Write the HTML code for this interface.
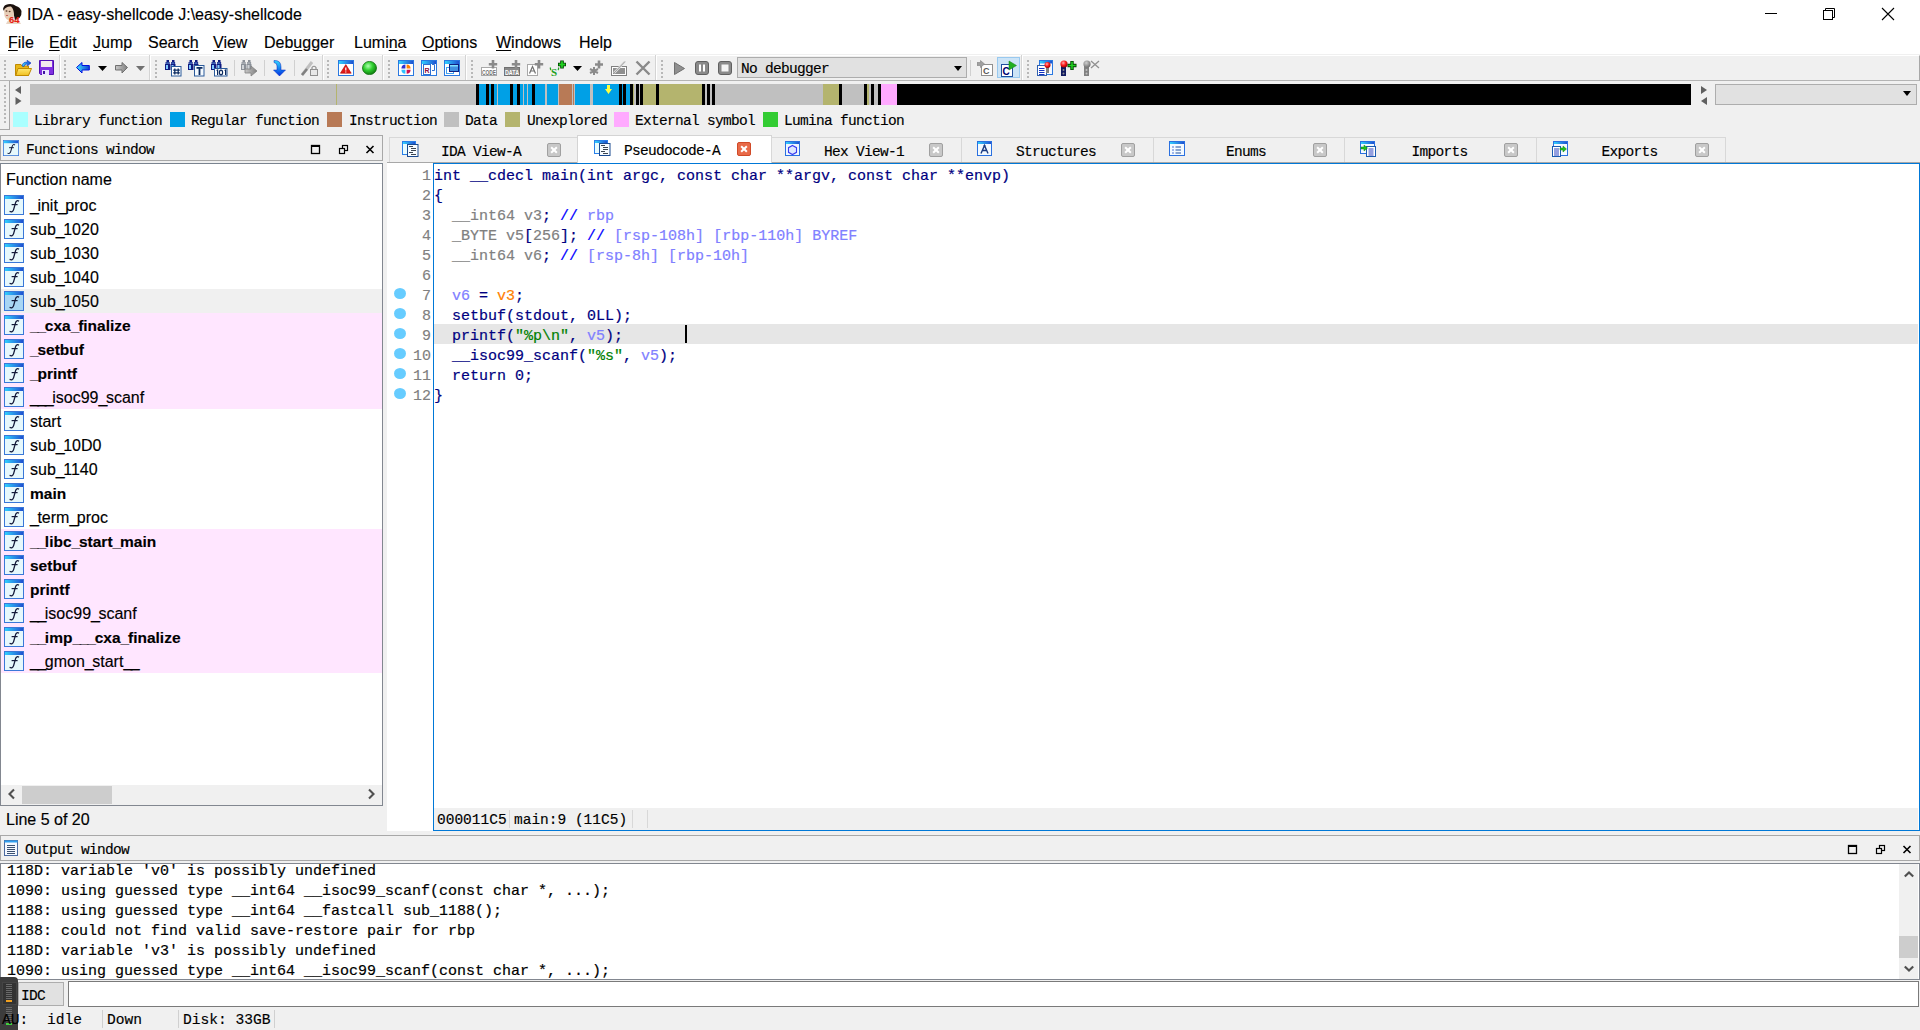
<!DOCTYPE html><html><head><meta charset="utf-8"><style>
*{box-sizing:border-box}
html,body{margin:0;padding:0}
body{width:1920px;height:1030px;overflow:hidden;position:relative;background:#f0f0f0;font-family:"Liberation Sans",sans-serif;color:#000;-webkit-text-stroke:0.15px currentColor}
.a{position:absolute}
svg text{-webkit-text-stroke:0}
.pre{white-space:pre}
.mono{font-family:"Liberation Mono",monospace}
.mi{position:absolute;top:33px;font-size:16px;line-height:20px;white-space:pre}
.mi u{text-decoration:underline;text-underline-offset:1.5px;text-decoration-thickness:1px}
.grip{position:absolute;width:2px;background:repeating-linear-gradient(to bottom,#b8b8b8 0 2px,transparent 2px 4px)}
.lsw{position:absolute;top:112px;width:15px;height:15px}
.lt{position:absolute;top:113px;font-family:"Liberation Mono",monospace;font-size:14.5px;letter-spacing:-0.7px;line-height:16px;white-space:pre}
.nb{position:absolute;top:84px;height:21px}
.fi{position:absolute;left:4px;width:20px;height:20px;border:1px solid #3a7ad8;background:linear-gradient(#3ab8f0,#3a6ad8) top/100% 3px no-repeat,#e6f8fc}
.fi:after{content:"f";position:absolute;left:5px;top:0px;font-family:"Liberation Serif",serif;font-style:italic;font-size:17px;line-height:18px;color:#1a2040}
.fr{position:absolute;left:1px;width:381px;height:24px}
.ft{position:absolute;left:30px;font-size:16px;line-height:20px;white-space:pre}
.ftb{font-weight:bold;font-size:15.5px}
.tab{position:absolute;top:137px;height:25px;border:1px solid #d8d8d8;border-bottom:none;background:#f0f0f0}
.tabt{position:absolute;top:143px;font-family:"Liberation Mono",monospace;font-size:14.5px;letter-spacing:-0.7px;line-height:16px;white-space:pre;text-align:center}
.tcl{position:absolute;top:143px;width:14px;height:14px;border:1px solid #a0a0a0;border-radius:2px;background:#c8c8c8}
.tcl:before,.tcl:after{content:"";position:absolute;left:2px;top:5px;width:8px;height:2px;background:#fff;transform:rotate(45deg)}
.tcl:after{transform:rotate(-45deg)}
.code{position:absolute;left:434px;font-family:"Liberation Mono",monospace;font-size:15px;line-height:20px;white-space:pre;color:#000080;-webkit-text-stroke:0.2px currentColor}
.ln{position:absolute;left:395px;width:36px;text-align:right;font-family:"Liberation Mono",monospace;font-size:15px;line-height:20px;color:#808080}
.dot{position:absolute;left:394px;width:12px;height:11px;border-radius:50%;background:#66ccff}
.g{color:#808080}.b{color:#0000ff}.v{color:#8080ff}.o{color:#ff8000}.s{color:#008000}
.out{position:absolute;left:7px;font-family:"Liberation Mono",monospace;font-size:15px;line-height:20px;white-space:pre;-webkit-text-stroke:0.2px currentColor}
</style></head><body>
<div class="a" style="left:0;top:0;width:1920px;height:54px;background:#fff"></div>
<svg class="a" style="left:0px;top:0px" width="26" height="26" viewBox="0 0 26 26">
<path d="M6 24 Q7 21 9 20 L18 19 Q20 22 21 24Z" fill="#e8d4c4"/>
<path d="M3 9 Q4 4.5 8 4.2 Q13 3.5 16 6 Q20 7 21.5 11 Q22 15 19.5 18 L15 20 Q14 14 12 9 Q8 7 4 11Z" fill="#1a100c"/>
<path d="M4 10 Q6 6 11 6.5 Q14 9 14 15 Q13.5 20 10 20.5 Q6 20 4.5 16Z" fill="#e6cdb6"/>
<ellipse cx="6.5" cy="11" rx="1" ry="0.7" fill="#5a3a2a"/><ellipse cx="9.6" cy="11.5" rx="1" ry="0.7" fill="#5a3a2a"/>
<ellipse cx="7" cy="15.5" rx="1.2" ry="0.6" fill="#c05050"/>
<text x="9" y="23.2" font-family="Liberation Sans" font-size="9.5" font-weight="bold" fill="#e82010">64</text>
</svg>
<div class="a pre" style="left:27px;top:5px;font-size:16px;line-height:20px">IDA - easy-shellcode J:\easy-shellcode</div>
<svg class="a" style="left:1760px;top:4px" width="150" height="22" viewBox="0 0 150 22">
<rect x="5" y="9" width="12" height="1" fill="#000"/>
<rect x="63.5" y="6.5" width="9" height="9" fill="none" stroke="#000" stroke-width="1"/>
<path d="M65.5 6.5 V4.5 H74.5 V13.5 H72.5" fill="none" stroke="#000" stroke-width="1"/>
<path d="M122 4 L134 16 M134 4 L122 16" stroke="#000" stroke-width="1.1"/>
</svg>
<div class="mi" style="left:8px"><u>F</u>ile</div>
<div class="mi" style="left:49px"><u>E</u>dit</div>
<div class="mi" style="left:93px"><u>J</u>ump</div>
<div class="mi" style="left:148px">Searc<u>h</u></div>
<div class="mi" style="left:213px"><u>V</u>iew</div>
<div class="mi" style="left:264px">Deb<u>u</u>gger</div>
<div class="mi" style="left:354px">Lumi<u>n</u>a</div>
<div class="mi" style="left:422px"><u>O</u>ptions</div>
<div class="mi" style="left:496px"><u>W</u>indows</div>
<div class="mi" style="left:579px">Help</div>
<div class="a" style="left:0;top:55px;width:1920px;height:26px;background:#f0f0f0;border-top:1px solid #fff;border-bottom:1px solid #b4b4b4;border-right:1px solid #a8a8a8"></div>
<div class="a" style="left:59px;top:55px;width:1px;height:25px;background:#d4d4d4"></div><div class="a" style="left:60px;top:55px;width:1px;height:25px;background:#fff"></div>
<div class="a" style="left:149px;top:55px;width:1px;height:25px;background:#d4d4d4"></div><div class="a" style="left:150px;top:55px;width:1px;height:25px;background:#fff"></div>
<div class="a" style="left:322px;top:55px;width:1px;height:25px;background:#d4d4d4"></div><div class="a" style="left:323px;top:55px;width:1px;height:25px;background:#fff"></div>
<div class="a" style="left:382px;top:55px;width:1px;height:25px;background:#d4d4d4"></div><div class="a" style="left:383px;top:55px;width:1px;height:25px;background:#fff"></div>
<div class="a" style="left:465px;top:55px;width:1px;height:25px;background:#d4d4d4"></div><div class="a" style="left:466px;top:55px;width:1px;height:25px;background:#fff"></div>
<div class="a" style="left:655px;top:55px;width:1px;height:25px;background:#d4d4d4"></div><div class="a" style="left:656px;top:55px;width:1px;height:25px;background:#fff"></div>
<div class="a" style="left:1021px;top:55px;width:1px;height:25px;background:#d4d4d4"></div><div class="a" style="left:1022px;top:55px;width:1px;height:25px;background:#fff"></div>
<div class="grip" style="left:4px;top:60px;height:18px"></div>
<div class="grip" style="left:64px;top:60px;height:18px"></div>
<div class="grip" style="left:155px;top:60px;height:18px"></div>
<div class="grip" style="left:327px;top:60px;height:18px"></div>
<div class="grip" style="left:388px;top:60px;height:18px"></div>
<div class="grip" style="left:471px;top:60px;height:18px"></div>
<div class="grip" style="left:661px;top:60px;height:18px"></div>
<div class="grip" style="left:1027px;top:60px;height:18px"></div>
<div class="a" style="left:234px;top:60px;width:1px;height:16px;background:#d0d0d0"></div>
<div class="a" style="left:264px;top:60px;width:1px;height:16px;background:#d0d0d0"></div>
<div class="a" style="left:294px;top:60px;width:1px;height:16px;background:#d0d0d0"></div>
<div class="a" style="left:970px;top:60px;width:1px;height:16px;background:#d0d0d0"></div>
<svg width="0" height="0" style="position:absolute"><defs>
<linearGradient id="gFold" x1="0" y1="0" x2="0" y2="1"><stop offset="0" stop-color="#ffe870"/><stop offset="1" stop-color="#f0c020"/></linearGradient>
<linearGradient id="gBlueArr" x1="0" y1="0" x2="1" y2="0"><stop offset="0" stop-color="#40e0ff"/><stop offset="1" stop-color="#1040d0"/></linearGradient>
<linearGradient id="gGrayArr" x1="0" y1="0" x2="1" y2="0"><stop offset="0" stop-color="#c8c8c8"/><stop offset="1" stop-color="#808080"/></linearGradient>
<linearGradient id="gWin" x1="0" y1="0" x2="1" y2="0"><stop offset="0" stop-color="#30d0ff"/><stop offset="1" stop-color="#2050d0"/></linearGradient>
<linearGradient id="gDown" x1="0" y1="0" x2="0" y2="1"><stop offset="0" stop-color="#30d8ff"/><stop offset="1" stop-color="#0030e0"/></linearGradient>
<radialGradient id="gGreen" cx="0.4" cy="0.35" r="0.65"><stop offset="0" stop-color="#b0ffb0"/><stop offset="0.5" stop-color="#30d030"/><stop offset="1" stop-color="#108010"/></radialGradient>
<radialGradient id="gRed" cx="0.4" cy="0.35" r="0.65"><stop offset="0" stop-color="#ffb0b0"/><stop offset="0.5" stop-color="#ff2020"/><stop offset="1" stop-color="#a00000"/></radialGradient>
<radialGradient id="gGrayB" cx="0.4" cy="0.35" r="0.65"><stop offset="0" stop-color="#d0d0d0"/><stop offset="1" stop-color="#707070"/></radialGradient>
<symbol id="fic" viewBox="0 0 20 20"><rect x="0.5" y="0.5" width="19" height="19" fill="#e6f8fc" stroke="#3a78d8"/><rect x="1" y="1" width="18" height="3" fill="url(#gWin)"/><path d="M15 6.2 C13.6 5.2 12.2 5.6 11.6 7.6 L9.6 14.6 C9 16.8 7.6 17.2 5.6 16.4" fill="none" stroke="#141a3a" stroke-width="1.3"/><path d="M7.6 9.6 H13.6" stroke="#141a3a" stroke-width="1.2"/></symbol>
<symbol id="ficsel" viewBox="0 0 20 20"><rect x="0.5" y="0.5" width="19" height="19" fill="#a8d6f4" stroke="#3a78d8"/><rect x="1" y="1" width="18" height="3" fill="url(#gWin)"/><path d="M15 6.2 C13.6 5.2 12.2 5.6 11.6 7.6 L9.6 14.6 C9 16.8 7.6 17.2 5.6 16.4" fill="none" stroke="#141a3a" stroke-width="1.3"/><path d="M7.6 9.6 H13.6" stroke="#141a3a" stroke-width="1.2"/></symbol>
<symbol id="winic" viewBox="0 0 16 16"><rect x="0.5" y="0.5" width="15" height="15" fill="#fff" stroke="#2a78e0"/><rect x="1" y="1" width="14" height="3" fill="url(#gWin)"/></symbol>
</defs></svg>
<svg class="a" style="left:15px;top:60px" width="17" height="16" viewBox="0 0 17 16"><path d="M0.5 4.5 H6 L7 6 H13.5 V15.5 H0.5Z" fill="#e8b818" stroke="#c08a00"/><path d="M3 8.5 H16.5 L13.5 15.5 H0.8Z" fill="url(#gFold)" stroke="#c08a00"/><path d="M7 6 Q8 1.5 12.5 2.2 L12 0.3 L16 3 L12.5 5.8 L12.6 4 Q9.5 3.6 9 6.5Z" fill="url(#gBlueArr)" stroke="#1030c0" stroke-width="0.6"/></svg>
<svg class="a" style="left:39px;top:60px" width="15" height="15" viewBox="0 0 15 15"><path d="M0.5 0.5 H14.5 V14.5 H1.5 L0.5 13.5Z" fill="#8030e0" stroke="#5010b0"/><rect x="2" y="1" width="11" height="6" fill="#f4e8ee"/><rect x="3" y="10" width="7" height="5" fill="#eae6ff"/><rect x="4" y="11" width="2" height="3" fill="#4010a0"/></svg>
<svg class="a" style="left:76px;top:62px" width="14" height="12" viewBox="0 0 14 12"><path d="M0.5 5.5 L6 0.5 V3.5 H13.3 V8 H6 V11 Z" fill="url(#gBlueArr)" stroke="#0010e0" stroke-width="1"/></svg>
<svg class="a" style="left:98px;top:66px" width="9" height="5" viewBox="0 0 9 5"><path d="M0 0 H9 L4.5 5Z" fill="#000"/></svg>
<svg class="a" style="left:115px;top:62px" width="13" height="12" viewBox="0 0 13 12"><path d="M12.5 5.5 L7 0.5 V3.5 H0.5 V8 H7 V11 Z" fill="url(#gGrayArr)" stroke="#707070" stroke-width="1"/></svg>
<svg class="a" style="left:136px;top:66px" width="9" height="5" viewBox="0 0 9 5"><path d="M0 0 H9 L4.5 5Z" fill="#707070"/></svg>
<svg class="a" style="left:165px;top:60px" width="17" height="17" viewBox="0 0 17 17"><path d="M1.5 0 H4 V2 H4.6 V4 H5 V10 H0 V4 H0.6 V2 H1.5Z" fill="#101a80"/><rect x="1" y="5" width="2" height="4" fill="#80c8ff"/><rect x="1" y="2.6" width="3" height="1" fill="#80c8ff" opacity="0.7"/><path d="M7.0 0 H9.5 V2 H10.1 V4 H10.5 V10 H5.5 V4 H6.1 V2 H7.0Z" fill="#101a80"/><rect x="6.5" y="5" width="2" height="4" fill="#80c8ff"/><rect x="6.5" y="2.6" width="3" height="1" fill="#80c8ff" opacity="0.7"/><rect x="6.5" y="6.5" width="9.5" height="9.5" fill="#fff" stroke="#2a5a9a"/><path d="M9.8 8.5 V14.5 M13.2 8.5 V14.5 M8.2 10.2 H14.8 M8.2 12.8 H14.8" stroke="#0a2a60" stroke-width="1.3"/></svg>
<svg class="a" style="left:188px;top:60px" width="17" height="17" viewBox="0 0 17 17"><path d="M1.5 0 H4 V2 H4.6 V4 H5 V10 H0 V4 H0.6 V2 H1.5Z" fill="#101a80"/><rect x="1" y="5" width="2" height="4" fill="#80c8ff"/><rect x="1" y="2.6" width="3" height="1" fill="#80c8ff" opacity="0.7"/><path d="M7.0 0 H9.5 V2 H10.1 V4 H10.5 V10 H5.5 V4 H6.1 V2 H7.0Z" fill="#101a80"/><rect x="6.5" y="5" width="2" height="4" fill="#80c8ff"/><rect x="6.5" y="2.6" width="3" height="1" fill="#80c8ff" opacity="0.7"/><rect x="6.5" y="5.5" width="9.5" height="10.5" fill="#f4faff" stroke="#2a5a9a"/><path d="M8.5 7.8 H14.5 M11.5 7.8 V15" stroke="#0a2a60" stroke-width="1.8"/></svg>
<svg class="a" style="left:211px;top:60px" width="17" height="17" viewBox="0 0 17 17"><path d="M1.5 0 H4 V2 H4.6 V4 H5 V10 H0 V4 H0.6 V2 H1.5Z" fill="#101a80"/><rect x="1" y="5" width="2" height="4" fill="#80c8ff"/><rect x="1" y="2.6" width="3" height="1" fill="#80c8ff" opacity="0.7"/><path d="M7.0 0 H9.5 V2 H10.1 V4 H10.5 V10 H5.5 V4 H6.1 V2 H7.0Z" fill="#101a80"/><rect x="6.5" y="5" width="2" height="4" fill="#80c8ff"/><rect x="6.5" y="2.6" width="3" height="1" fill="#80c8ff" opacity="0.7"/><rect x="3.5" y="8.5" width="12.5" height="7.5" fill="#fff" stroke="#2a5a9a"/><path d="M5.6 10.6 L6.6 10 V15 M13.6 10.6 L14.6 10 V15" stroke="#0a2a60" stroke-width="1.2" fill="none"/><ellipse cx="10" cy="12.5" rx="1.6" ry="2.3" fill="none" stroke="#0a2a60" stroke-width="1.2"/></svg>
<svg class="a" style="left:241px;top:60px" width="17" height="17" viewBox="0 0 17 17"><path d="M1.5 0 H4 V2 H4.6 V4 H5 V10 H0 V4 H0.6 V2 H1.5Z" fill="#8a9098"/><rect x="1" y="5" width="2" height="4" fill="#d0d4d8"/><rect x="1" y="2.6" width="3" height="1" fill="#d0d4d8" opacity="0.7"/><path d="M7.0 0 H9.5 V2 H10.1 V4 H10.5 V10 H5.5 V4 H6.1 V2 H7.0Z" fill="#8a9098"/><rect x="6.5" y="5" width="2" height="4" fill="#d0d4d8"/><rect x="6.5" y="2.6" width="3" height="1" fill="#d0d4d8" opacity="0.7"/><path d="M4 9 H10 V6 L16 11 L10 16 V13 H4Z" fill="url(#gGrayArr)" stroke="#808080" stroke-width="0.8"/></svg>
<svg class="a" style="left:273px;top:60px" width="13" height="16" viewBox="0 0 13 16"><path d="M1 0.5 Q8 0 8 7 V10 H12.5 L6.5 16 L0.5 10 H4 V6 Q4 3 1 2.5Z" fill="url(#gDown)" stroke="#0020c0" stroke-width="0.5"/></svg>
<svg class="a" style="left:301px;top:60px" width="17" height="16" viewBox="0 0 17 16"><path d="M1 15 L11 2" stroke="#c0c0c0" stroke-width="3"/><path d="M1 15 L6 9" stroke="#808080" stroke-width="2.5"/><rect x="9.5" y="9.5" width="7" height="6" fill="#e8e8e8" stroke="#909090"/><path d="M11 9.5 V7.5 Q13 5 15 7.5 V9.5" fill="none" stroke="#909090" stroke-width="1.2"/></svg>
<svg class="a" style="left:338px;top:60px" width="16" height="16" viewBox="0 0 16 16"><use href="#winic" width="16" height="16"/><path d="M7.8 4.6 L13.2 13.2 H2.4Z" fill="#e01818" stroke="#b00000" stroke-width="0.6"/><path d="M7.8 7.6 V10.6 M7.8 11.4 V12.4" stroke="#fff" stroke-width="1.2"/></svg>
<svg class="a" style="left:362px;top:61px" width="15" height="14" viewBox="0 0 15 14"><ellipse cx="7.5" cy="7" rx="7" ry="6.6" fill="url(#gGreen)" stroke="#107010" stroke-width="0.8"/></svg>
<svg class="a" style="left:398px;top:60px" width="16" height="16" viewBox="0 0 16 16"><use href="#winic" width="16" height="16"/><path d="M7.4 12.5 V8.6 H3.4 A4.2 4.2 0 0 1 7.4 4.6Z" fill="#3030d0"/><path d="M8.6 4.6 A4.2 4.2 0 0 1 12.6 8.6 H8.6Z" fill="#ff8000"/><path d="M3.4 9.8 H7.4 V13.8 A4.2 4.2 0 0 1 3.4 9.8Z" fill="#30c0ff"/><path d="M8.6 9.8 H12.6 A4.2 4.2 0 0 1 8.6 13.8Z" fill="#d01050"/></svg>
<svg class="a" style="left:421px;top:60px" width="16" height="16" viewBox="0 0 16 16"><use href="#winic" width="16" height="16"/><rect x="2.5" y="4.5" width="7" height="10" fill="#fff" stroke="#3070d0"/><text x="3.6" y="12.8" font-family="Liberation Sans" font-weight="bold" font-size="7" fill="#901040">R</text><path d="M11 4.5 H13.5 V10.5 H11" fill="none" stroke="#3070d0"/></svg>
<svg class="a" style="left:444px;top:60px" width="16" height="16" viewBox="0 0 16 16"><use href="#winic" width="16" height="16"/><rect x="2.5" y="7.5" width="7" height="6" fill="#fff" stroke="#40a0f0"/><rect x="5.5" y="4.5" width="9" height="7" fill="#4090e0" stroke="#102080"/><rect x="6" y="5" width="8" height="1.5" fill="#80e0ff"/></svg>
<svg class="a" style="left:481px;top:60px" width="17" height="16" viewBox="0 0 17 16"><rect x="0.5" y="7.5" width="15" height="8" fill="#fff" stroke="#a8a8a8"/><text x="1" y="14.5" font-family="Liberation Sans Narrow,Liberation Sans" font-weight="bold" font-size="6.5" fill="#707070" textLength="14" lengthAdjust="spacingAndGlyphs">CODE</text><path d="M12 0 V8.5 M7.8 4.2 H16.2" stroke="#8a8a8a" stroke-width="2.6"/></svg>
<svg class="a" style="left:504px;top:60px" width="17" height="16" viewBox="0 0 17 16"><rect x="0.5" y="7.5" width="15" height="8" fill="#888" stroke="#707070"/><text x="1" y="14.5" font-family="Liberation Sans" font-weight="bold" font-size="6.5" fill="#fff" textLength="14" lengthAdjust="spacingAndGlyphs">DATA</text><path d="M12 0 V8.5 M7.8 4.2 H16.2" stroke="#8a8a8a" stroke-width="2.6"/></svg>
<svg class="a" style="left:527px;top:60px" width="17" height="16" viewBox="0 0 17 16"><rect x="0.5" y="4.5" width="10" height="11" fill="#fff" stroke="#a8a8a8"/><path d="M2.5 13.5 L5.5 6.5 L8.5 13.5 M3.5 11 H7.5" fill="none" stroke="#707070" stroke-width="1.2"/><path d="M12 0 V8.5 M7.8 4.2 H16.2" stroke="#8a8a8a" stroke-width="2.6"/></svg>
<svg class="a" style="left:549px;top:60px" width="18" height="16" viewBox="0 0 18 16"><text x="2" y="15.5" font-family="Liberation Serif" font-weight="bold" font-size="11" fill="#20a020">S</text><path d="M1.5 7.5 Q1 9 2 10 M9.5 7.5 Q10 9 9 10" stroke="#20a020" stroke-width="1.3" fill="none"/><path d="M13 0.5 V8.5 M9 4.5 H17" stroke="#004000" stroke-width="3.6"/><path d="M13 1.3 V7.7 M9.8 4.5 H16.2" stroke="#20d020" stroke-width="1.8"/></svg>
<svg class="a" style="left:573px;top:66px" width="9" height="5" viewBox="0 0 9 5"><path d="M0 0 H9 L4.5 5Z" fill="#000"/></svg>
<svg class="a" style="left:588px;top:60px" width="16" height="16" viewBox="0 0 16 16"><path d="M6 7 V15 M2 9 L10 13 M10 9 L2 13" stroke="#8a8a8a" stroke-width="2"/><path d="M11 0.5 V8.5 M7 4.5 H15" stroke="#8a8a8a" stroke-width="2.6"/></svg>
<svg class="a" style="left:611px;top:60px" width="17" height="16" viewBox="0 0 17 16"><rect x="0.5" y="6.5" width="15" height="9" fill="#fff" stroke="#808080"/><rect x="2" y="8" width="12" height="6" fill="#909090"/><path d="M3 13 L14 1.5" stroke="#e0e0e0" stroke-width="2.4"/><path d="M3 13 L14 1.5" stroke="#8a8a8a" stroke-width="0.8"/></svg>
<svg class="a" style="left:635px;top:60px" width="16" height="16" viewBox="0 0 16 16"><path d="M1.5 1.5 L14.5 14.5 M14.5 1.5 L1.5 14.5" stroke="#8a8a8a" stroke-width="2.4"/></svg>
<svg class="a" style="left:674px;top:62px" width="11" height="13" viewBox="0 0 11 13"><path d="M0.5 0.5 L10.5 6.5 L0.5 12.5Z" fill="#909090" stroke="#707070"/></svg>
<svg class="a" style="left:695px;top:61px" width="14" height="14" viewBox="0 0 14 14"><rect x="0.5" y="0.5" width="13" height="13" rx="2.5" fill="#8a8a8a" stroke="#606060"/><rect x="4" y="3.5" width="2" height="7" fill="#fff"/><rect x="8" y="3.5" width="2" height="7" fill="#fff"/></svg>
<svg class="a" style="left:718px;top:61px" width="14" height="14" viewBox="0 0 14 14"><rect x="0.5" y="0.5" width="13" height="13" rx="2.5" fill="#8a8a8a" stroke="#606060"/><rect x="3.5" y="3.5" width="7" height="7" fill="#f4f4f4"/></svg>
<div class="a" style="left:737px;top:57px;width:230px;height:21px;background:#e1e1e1;border:1px solid #adadad"></div>
<div class="a mono pre" style="left:741px;top:61px;font-size:14.5px;letter-spacing:-0.7px;line-height:16px">No debugger</div>
<svg class="a" style="left:954px;top:66px" width="8" height="5" viewBox="0 0 8 5"><path d="M0 0 H8 L4 5Z" fill="#000"/></svg>
<svg class="a" style="left:977px;top:60px" width="17" height="16" viewBox="0 0 17 16"><rect x="4.5" y="4.5" width="11" height="11" fill="#fff" stroke="#909090"/><text x="6" y="14" font-family="Liberation Sans" font-weight="bold" font-size="9" fill="#585858">C</text><path d="M0 2.5 H3.5 V0.5 L7.5 4 L3.5 7.5 V5.5 H0Z" fill="#a0a0a0" stroke="#808080" stroke-width="0.6"/></svg>
<div class="a" style="left:997px;top:57px;width:23px;height:21px;background:#cce4f7;border:1px solid #99c9ef"></div>
<svg class="a" style="left:1001px;top:60px" width="16" height="17" viewBox="0 0 16 17"><rect x="0.5" y="4.5" width="11" height="12" fill="#fff" stroke="#2050a0"/><text x="1.6" y="14.5" font-family="Liberation Sans" font-weight="bold" font-size="10" fill="#000070">C</text><path d="M8 1 L15.5 5.5 L8 10Z" fill="#20b020" stroke="#108010" stroke-width="0.5"/></svg>
<svg class="a" style="left:1037px;top:60px" width="16" height="16" viewBox="0 0 16 16"><rect x="2.5" y="0.5" width="13" height="14" fill="#f4f8ff" stroke="#2a78e0"/><rect x="3" y="1" width="12" height="2.5" fill="url(#gWin)"/><rect x="0.5" y="5.5" width="9" height="10" fill="#fff" stroke="#3060b0"/><path d="M2 8.5H7.5M2 10.5H7.5M2 12.5H7.5M2 14.5H7.5" stroke="#1030c0"/><rect x="9" y="7" width="3" height="6" fill="#808080"/><circle cx="10.5" cy="5" r="3" fill="url(#gRed)"/></svg>
<svg class="a" style="left:1060px;top:60px" width="17" height="16" viewBox="0 0 17 16"><rect x="1" y="5" width="5" height="11" fill="#101a60"/><circle cx="3.5" cy="10" r="1" fill="#909090"/><circle cx="3.5" cy="13.5" r="1" fill="#909090"/><circle cx="4" cy="4" r="3.6" fill="url(#gRed)"/><path d="M12 1 V10 M7.5 5.5 H16.5" stroke="#004000" stroke-width="3.4"/><path d="M12 1.8 V9.2 M8.3 5.5 H15.7" stroke="#20d020" stroke-width="1.6"/></svg>
<svg class="a" style="left:1083px;top:60px" width="17" height="16" viewBox="0 0 17 16"><rect x="1" y="5" width="5" height="11" fill="#808080"/><circle cx="3.5" cy="10" r="1" fill="#c0c0c0"/><circle cx="3.5" cy="13.5" r="1" fill="#c0c0c0"/><circle cx="4" cy="4" r="3.6" fill="url(#gGrayB)"/><path d="M8 1 L16 8 M16 1 L8 8" stroke="#909090" stroke-width="1.3"/></svg>
<div class="a" style="left:0;top:81px;width:10px;height:49px;border-right:1px solid #a8a8a8;border-bottom:1px solid #a8a8a8;background:#f0f0f0"></div>
<div class="grip" style="left:4px;top:85px;height:40px"></div>
<svg class="a" style="left:14px;top:85px" width="10" height="21"><path d="M7 1 L1 5 L7 9Z M1.5 12 L7.5 16 L1.5 20Z" fill="#606060"/></svg>
<div class="nb" style="left:30px;width:446px;background:#c0c0c0"></div>
<div class="nb" style="left:476px;width:3px;background:#000"></div>
<div class="nb" style="left:479px;width:7px;background:#00a0e6"></div>
<div class="nb" style="left:486px;width:3px;background:#000"></div>
<div class="nb" style="left:489px;width:2px;background:#00a0e6"></div>
<div class="nb" style="left:491px;width:3px;background:#000"></div>
<div class="nb" style="left:494px;width:3px;background:#00a0e6"></div>
<div class="nb" style="left:497px;width:1px;background:#c0c0c0"></div>
<div class="nb" style="left:498px;width:12px;background:#00a0e6"></div>
<div class="nb" style="left:510px;width:3px;background:#000"></div>
<div class="nb" style="left:513px;width:4px;background:#00a0e6"></div>
<div class="nb" style="left:517px;width:3px;background:#000"></div>
<div class="nb" style="left:520px;width:3px;background:#00a0e6"></div>
<div class="nb" style="left:523px;width:1px;background:#c0c0c0"></div>
<div class="nb" style="left:524px;width:3px;background:#00a0e6"></div>
<div class="nb" style="left:527px;width:1px;background:#c0c0c0"></div>
<div class="nb" style="left:528px;width:4px;background:#00a0e6"></div>
<div class="nb" style="left:532px;width:3px;background:#000"></div>
<div class="nb" style="left:535px;width:10px;background:#00a0e6"></div>
<div class="nb" style="left:545px;width:2px;background:#c0c0c0"></div>
<div class="nb" style="left:547px;width:11px;background:#00a0e6"></div>
<div class="nb" style="left:558px;width:1px;background:#c0c0c0"></div>
<div class="nb" style="left:559px;width:13px;background:#b87a56"></div>
<div class="nb" style="left:572px;width:1px;background:#c0c0c0"></div>
<div class="nb" style="left:573px;width:1px;background:#b87a56"></div>
<div class="nb" style="left:574px;width:1px;background:#c0c0c0"></div>
<div class="nb" style="left:575px;width:15px;background:#00a0e6"></div>
<div class="nb" style="left:590px;width:3px;background:#c0c0c0"></div>
<div class="nb" style="left:593px;width:26px;background:#00a0e6"></div>
<div class="nb" style="left:619px;width:3px;background:#000"></div>
<div class="nb" style="left:622px;width:1px;background:#00a0e6"></div>
<div class="nb" style="left:623px;width:3px;background:#000"></div>
<div class="nb" style="left:626px;width:4px;background:#00a0e6"></div>
<div class="nb" style="left:630px;width:3px;background:#000"></div>
<div class="nb" style="left:633px;width:1px;background:#b4b46e"></div>
<div class="nb" style="left:634px;width:2px;background:#c0c0c0"></div>
<div class="nb" style="left:636px;width:3px;background:#000"></div>
<div class="nb" style="left:639px;width:1px;background:#c0c0c0"></div>
<div class="nb" style="left:640px;width:3px;background:#000"></div>
<div class="nb" style="left:643px;width:13px;background:#b4b46e"></div>
<div class="nb" style="left:656px;width:3px;background:#000"></div>
<div class="nb" style="left:659px;width:43px;background:#b4b46e"></div>
<div class="nb" style="left:702px;width:3px;background:#000"></div>
<div class="nb" style="left:705px;width:2px;background:#c0c0c0"></div>
<div class="nb" style="left:707px;width:3px;background:#000"></div>
<div class="nb" style="left:710px;width:2px;background:#c0c0c0"></div>
<div class="nb" style="left:712px;width:3px;background:#000"></div>
<div class="nb" style="left:715px;width:108px;background:#c0c0c0"></div>
<div class="nb" style="left:823px;width:16px;background:#b4b46e"></div>
<div class="nb" style="left:839px;width:3px;background:#000"></div>
<div class="nb" style="left:842px;width:22px;background:#c0c0c0"></div>
<div class="nb" style="left:864px;width:3px;background:#000"></div>
<div class="nb" style="left:867px;width:2px;background:#b4b46e"></div>
<div class="nb" style="left:869px;width:2px;background:#c0c0c0"></div>
<div class="nb" style="left:871px;width:3px;background:#000"></div>
<div class="nb" style="left:874px;width:4px;background:#c0c0c0"></div>
<div class="nb" style="left:878px;width:3px;background:#000"></div>
<div class="nb" style="left:881px;width:16px;background:#ffaaff"></div>
<div class="nb" style="left:897px;width:794px;background:#000"></div>
<div class="nb" style="left:336px;width:1px;background:#b4b46e"></div>
<svg class="a" style="left:605px;top:85px" width="7" height="9"><path d="M2 0 H5 V4 H7 L3.5 9 L0 4 H2Z" fill="#ffff40"/></svg>
<svg class="a" style="left:1699px;top:85px" width="10" height="21"><path d="M2 1 L8 5 L2 9Z M8 12 L2 16 L8 20Z" fill="#606060"/></svg>
<div class="a" style="left:1715px;top:84px;width:202px;height:21px;background:#e1e1e1;border:1px solid #adadad"></div>
<svg class="a" style="left:1903px;top:91px" width="9" height="6"><path d="M0 0 H8 L4 5Z" fill="#000"/></svg>
<div class="lsw" style="left:13px;background:#aaffff"></div><div class="lt" style="left:34px">Library function</div>
<div class="lsw" style="left:170px;background:#00a0e6"></div><div class="lt" style="left:191px">Regular function</div>
<div class="lsw" style="left:327px;background:#b87a56"></div><div class="lt" style="left:349px">Instruction</div>
<div class="lsw" style="left:444px;background:#c0c0c0"></div><div class="lt" style="left:465px">Data</div>
<div class="lsw" style="left:505px;background:#b4b46e"></div><div class="lt" style="left:527px">Unexplored</div>
<div class="lsw" style="left:614px;background:#ffaaff"></div><div class="lt" style="left:635px">External symbol</div>
<div class="lsw" style="left:763px;background:#33cc33"></div><div class="lt" style="left:784px">Lumina function</div>
<div class="a" style="left:0;top:135px;width:383px;height:26px;border:1px solid #a8a8a8;background:#f0f0f0"></div>
<svg class="a" style="left:3px;top:140px" width="16" height="16" viewBox="0 0 20 20"><use href="#fic" width="20" height="20"/></svg>
<div class="a mono pre" style="left:26px;top:142px;font-size:14.5px;letter-spacing:-0.7px;line-height:16px">Functions window</div>
<svg class="a" style="left:305px;top:140px" width="75" height="18" viewBox="0 0 75 18">
<rect x="6.5" y="5.5" width="8" height="8" fill="none" stroke="#000" stroke-width="1.3"/><rect x="6" y="5" width="9" height="2" fill="#000"/>
<rect x="37.5" y="5.5" width="5" height="5" fill="none" stroke="#000" stroke-width="1.2"/><rect x="34.5" y="8.5" width="5" height="5" fill="#f0f0f0" stroke="#000" stroke-width="1.2"/>
<path d="M61.5 6 L68.5 13 M68.5 6 L61.5 13" stroke="#000" stroke-width="1.6"/>
</svg>
<div class="a" style="left:0;top:163px;width:383px;height:643px;border:1px solid #828790;border-top-color:#7a8490;background:#fff"></div>
<div class="a pre" style="left:6px;top:170px;font-size:16px;line-height:20px">Function name</div>
<svg class="a" style="left:4px;top:195px" width="20" height="20"><use href="#fic"/></svg>
<div class="ft" style="top:196px"><span style="letter-spacing:-1.5px">_</span>init<span style="letter-spacing:-1.5px">_</span>proc</div>
<svg class="a" style="left:4px;top:219px" width="20" height="20"><use href="#fic"/></svg>
<div class="ft" style="top:220px">sub<span style="letter-spacing:-1.5px">_</span>1020</div>
<svg class="a" style="left:4px;top:243px" width="20" height="20"><use href="#fic"/></svg>
<div class="ft" style="top:244px">sub<span style="letter-spacing:-1.5px">_</span>1030</div>
<svg class="a" style="left:4px;top:267px" width="20" height="20"><use href="#fic"/></svg>
<div class="ft" style="top:268px">sub<span style="letter-spacing:-1.5px">_</span>1040</div>
<div class="fr" style="top:289px;background:#f0f0f0"></div>
<svg class="a" style="left:4px;top:291px" width="20" height="20"><use href="#ficsel"/></svg>
<div class="ft" style="top:292px">sub<span style="letter-spacing:-1.5px">_</span>1050</div>
<div class="fr" style="top:313px;background:#ffe6ff"></div>
<svg class="a" style="left:4px;top:315px" width="20" height="20"><use href="#fic"/></svg>
<div class="ft ftb" style="top:316px"><span style="letter-spacing:-1.2px">_</span><span style="letter-spacing:-1.2px">_</span>cxa<span style="letter-spacing:-1.2px">_</span>finalize</div>
<div class="fr" style="top:337px;background:#ffe6ff"></div>
<svg class="a" style="left:4px;top:339px" width="20" height="20"><use href="#fic"/></svg>
<div class="ft ftb" style="top:340px"><span style="letter-spacing:-1.2px">_</span>setbuf</div>
<div class="fr" style="top:361px;background:#ffe6ff"></div>
<svg class="a" style="left:4px;top:363px" width="20" height="20"><use href="#fic"/></svg>
<div class="ft ftb" style="top:364px"><span style="letter-spacing:-1.2px">_</span>printf</div>
<div class="fr" style="top:385px;background:#ffe6ff"></div>
<svg class="a" style="left:4px;top:387px" width="20" height="20"><use href="#fic"/></svg>
<div class="ft" style="top:388px"><span style="letter-spacing:-1.5px">_</span><span style="letter-spacing:-1.5px">_</span><span style="letter-spacing:-1.5px">_</span>isoc99<span style="letter-spacing:-1.5px">_</span>scanf</div>
<svg class="a" style="left:4px;top:411px" width="20" height="20"><use href="#fic"/></svg>
<div class="ft" style="top:412px">start</div>
<svg class="a" style="left:4px;top:435px" width="20" height="20"><use href="#fic"/></svg>
<div class="ft" style="top:436px">sub<span style="letter-spacing:-1.5px">_</span>10D0</div>
<svg class="a" style="left:4px;top:459px" width="20" height="20"><use href="#fic"/></svg>
<div class="ft" style="top:460px">sub<span style="letter-spacing:-1.5px">_</span>1140</div>
<svg class="a" style="left:4px;top:483px" width="20" height="20"><use href="#fic"/></svg>
<div class="ft ftb" style="top:484px">main</div>
<svg class="a" style="left:4px;top:507px" width="20" height="20"><use href="#fic"/></svg>
<div class="ft" style="top:508px"><span style="letter-spacing:-1.5px">_</span>term<span style="letter-spacing:-1.5px">_</span>proc</div>
<div class="fr" style="top:529px;background:#ffe6ff"></div>
<svg class="a" style="left:4px;top:531px" width="20" height="20"><use href="#fic"/></svg>
<div class="ft ftb" style="top:532px"><span style="letter-spacing:-1.2px">_</span><span style="letter-spacing:-1.2px">_</span>libc<span style="letter-spacing:-1.2px">_</span>start<span style="letter-spacing:-1.2px">_</span>main</div>
<div class="fr" style="top:553px;background:#ffe6ff"></div>
<svg class="a" style="left:4px;top:555px" width="20" height="20"><use href="#fic"/></svg>
<div class="ft ftb" style="top:556px">setbuf</div>
<div class="fr" style="top:577px;background:#ffe6ff"></div>
<svg class="a" style="left:4px;top:579px" width="20" height="20"><use href="#fic"/></svg>
<div class="ft ftb" style="top:580px">printf</div>
<div class="fr" style="top:601px;background:#ffe6ff"></div>
<svg class="a" style="left:4px;top:603px" width="20" height="20"><use href="#fic"/></svg>
<div class="ft" style="top:604px"><span style="letter-spacing:-1.5px">_</span><span style="letter-spacing:-1.5px">_</span>isoc99<span style="letter-spacing:-1.5px">_</span>scanf</div>
<div class="fr" style="top:625px;background:#ffe6ff"></div>
<svg class="a" style="left:4px;top:627px" width="20" height="20"><use href="#fic"/></svg>
<div class="ft ftb" style="top:628px"><span style="letter-spacing:-1.2px">_</span><span style="letter-spacing:-1.2px">_</span>imp<span style="letter-spacing:-1.2px">_</span><span style="letter-spacing:-1.2px">_</span><span style="letter-spacing:-1.2px">_</span>cxa<span style="letter-spacing:-1.2px">_</span>finalize</div>
<div class="fr" style="top:649px;background:#ffe6ff"></div>
<svg class="a" style="left:4px;top:651px" width="20" height="20"><use href="#fic"/></svg>
<div class="ft" style="top:652px"><span style="letter-spacing:-1.5px">_</span><span style="letter-spacing:-1.5px">_</span>gmon<span style="letter-spacing:-1.5px">_</span>start<span style="letter-spacing:-1.5px">_</span><span style="letter-spacing:-1.5px">_</span></div>
<div class="a" style="left:1px;top:785px;width:381px;height:20px;background:#f0f0f0"></div>
<div class="a" style="left:22px;top:786px;width:90px;height:18px;background:#cdcdcd"></div>
<svg class="a" style="left:5px;top:787px" width="12" height="14"><path d="M9 2.5 L4.5 7 L9 11.5" fill="none" stroke="#505050" stroke-width="2.1"/></svg>
<svg class="a" style="left:366px;top:787px" width="12" height="14"><path d="M3 2.5 L7.5 7 L3 11.5" fill="none" stroke="#505050" stroke-width="2.1"/></svg>
<div class="a pre" style="left:6px;top:810px;font-size:16px;line-height:20px">Line 5 of 20</div>
<div class="a" style="left:387px;top:162px;width:1533px;height:1px;background:#a8a8a8"></div>
<div class="tab" style="left:389px;width:189px"></div>
<svg class="a" style="left:402px;top:140px" width="17" height="17" viewBox="0 0 17 17"><rect x="0.5" y="1.5" width="13" height="13" fill="#e8fcff" stroke="#2a80e8"/><rect x="1" y="2" width="12" height="2" fill="url(#gWin)"/><rect x="5.5" y="4.5" width="10.5" height="12" fill="#f8fcff" stroke="#1a4a90"/><path d="M7 6.5H11M9 8.5H14M9 10.5H14M7 12.5H11M9 14.5H14" stroke="#3a4450" stroke-width="1"/></svg>
<div class="tabt" style="left:441px;top:144px;text-align:left">IDA View-A</div>
<div class="tcl" style="left:546.5px"></div>
<div class="a" style="left:577px;top:135px;width:195px;height:29px;background:#fff;border:1px solid #d4d4d4;border-bottom:none"></div>
<svg class="a" style="left:594px;top:139px" width="17" height="17" viewBox="0 0 17 17"><rect x="0.5" y="1.5" width="13" height="13" fill="#e8fcff" stroke="#2a80e8"/><rect x="1" y="2" width="12" height="2" fill="url(#gWin)"/><rect x="5.5" y="4.5" width="10.5" height="12" fill="#f8fcff" stroke="#1a4a90"/><path d="M7 6.5H11M9 8.5H14M9 10.5H14M7 12.5H11M9 14.5H14" stroke="#3a4450" stroke-width="1"/></svg>
<div class="tabt" style="left:624px;top:143px;text-align:left">Pseudocode-A</div>
<div class="tcl" style="left:737px;top:142px;background:#e86a48;border-color:#d04a28"></div>
<div class="tab" style="left:771px;width:191px"></div>
<svg class="a" style="left:785px;top:141px" width="17" height="17" viewBox="0 0 17 17"><rect x="0.5" y="0.5" width="14" height="14" fill="#eef6ff" stroke="#2a70e0"/><rect x="1" y="1" width="13" height="2" fill="url(#gWin)"/><path d="M7.5 4.5 L11.5 6.7 V11.3 L7.5 13.5 L3.5 11.3 V6.7Z" fill="#dde8ff" stroke="#3a3af0" stroke-width="1.1"/></svg>
<div class="tabt" style="left:824px;top:144px;text-align:left">Hex View-1</div>
<div class="tcl" style="left:929px"></div>
<div class="tab" style="left:961px;width:193px"></div>
<svg class="a" style="left:977px;top:141px" width="17" height="17" viewBox="0 0 17 17"><rect x="0.5" y="0.5" width="14" height="14" fill="#f4faff" stroke="#2a70e0"/><rect x="1" y="1" width="13" height="2" fill="url(#gWin)"/><path d="M4 12.5 L7.5 4.5 L11 12.5 M5.2 9.5 H9.8" fill="none" stroke="#1a3a80" stroke-width="1.4"/><circle cx="7.5" cy="4.8" r="1" fill="#1a3a80"/></svg>
<div class="tabt" style="left:1016px;top:144px;text-align:left">Structures</div>
<div class="tcl" style="left:1121px"></div>
<div class="tab" style="left:1153px;width:192px"></div>
<svg class="a" style="left:1169px;top:141px" width="17" height="17" viewBox="0 0 17 17"><rect x="0.5" y="0.5" width="15" height="14" fill="#f4faff" stroke="#2a70e0"/><rect x="1" y="1" width="14" height="2" fill="url(#gWin)"/><path d="M4 5.5 V6.5 M4 8.5 V9.5 M4 11.5 V12.5" stroke="#2050d0" stroke-width="1.6"/><path d="M6.5 6H12M6.5 9H12M6.5 12H12" stroke="#2050a0"/></svg>
<div class="tabt" style="left:1226px;top:144px;text-align:left">Enums</div>
<div class="tcl" style="left:1312.5px"></div>
<div class="tab" style="left:1344px;width:193px"></div>
<svg class="a" style="left:1360px;top:141px" width="17" height="17" viewBox="0 0 17 17"><rect x="0.5" y="0.5" width="14" height="12" fill="#f4faff" stroke="#2a70e0"/><rect x="1" y="1" width="13" height="2" fill="url(#gWin)"/><rect x="6.5" y="5.5" width="9" height="10" fill="#fff" stroke="#1a5ab0"/><path d="M8.5 8H13.5M8.5 10H13.5M8.5 12H13.5M8.5 14H13.5" stroke="#2a40c0"/><path d="M1 6 H4 V4 L7.5 7 L4 10 V8 H1Z" fill="#20c020" stroke="#108010" stroke-width="0.5"/></svg>
<div class="tabt" style="left:1411.5px;top:144px;text-align:left">Imports</div>
<div class="tcl" style="left:1504px"></div>
<div class="tab" style="left:1536px;width:190px"></div>
<svg class="a" style="left:1552px;top:141px" width="17" height="17" viewBox="0 0 17 17"><rect x="1.5" y="0.5" width="14" height="14" fill="#f4faff" stroke="#2a70e0"/><rect x="2" y="1" width="13" height="2" fill="url(#gWin)"/><rect x="0.5" y="5.5" width="8" height="10" fill="#fff" stroke="#1a5ab0"/><path d="M2 8H7M2 10H7M2 12H7M2 14H7" stroke="#2a40c0"/><path d="M8 7 H11 V5 L14.5 8 L11 11 V9 H8Z" fill="#20c020" stroke="#108010" stroke-width="0.5"/></svg>
<div class="tabt" style="left:1601.5px;top:144px;text-align:left">Exports</div>
<div class="tcl" style="left:1695px"></div>
<div class="a" style="left:387px;top:163px;width:47px;height:668px;background:#fff"></div>
<div class="a" style="left:433px;top:163px;width:1487px;height:668px;background:#fff;border:1px solid #0078d7"></div>
<div class="a" style="left:434px;top:324px;width:1484px;height:20px;background:#e6e6e6"></div>
<div class="a" style="left:685px;top:325px;width:2px;height:18px;background:#000"></div>
<div class="ln" style="top:167px">1</div>
<div class="code" style="top:167px"><span>int __cdecl main(int argc, const char **argv, const char **envp)</span></div>
<div class="ln" style="top:187px">2</div>
<div class="code" style="top:187px">{</div>
<div class="ln" style="top:207px">3</div>
<div class="code" style="top:207px">  <span class="g">__int64 v3</span>; <span class="b">//</span> <span class="v">rbp</span></div>
<div class="ln" style="top:227px">4</div>
<div class="code" style="top:227px">  <span class="g">_BYTE v5</span>[<span class="g">256</span>]; <span class="b">//</span> <span class="v">[rsp-108h] [rbp-110h] BYREF</span></div>
<div class="ln" style="top:247px">5</div>
<div class="code" style="top:247px">  <span class="g">__int64 v6</span>; <span class="b">//</span> <span class="v">[rsp-8h] [rbp-10h]</span></div>
<div class="ln" style="top:267px">6</div>
<div class="ln" style="top:287px">7</div>
<div class="code" style="top:287px">  <span class="v">v6</span> = <span class="o">v3</span>;</div>
<div class="dot" style="top:288px"></div>
<div class="ln" style="top:307px">8</div>
<div class="code" style="top:307px">  setbuf(stdout, 0LL);</div>
<div class="dot" style="top:308px"></div>
<div class="ln" style="top:327px">9</div>
<div class="code" style="top:327px">  printf(<span class="s">"%p\n"</span>, <span class="v">v5</span>);</div>
<div class="dot" style="top:328px"></div>
<div class="ln" style="top:347px">10</div>
<div class="code" style="top:347px">  __isoc99_scanf(<span class="s">"%s"</span>, <span class="v">v5</span>);</div>
<div class="dot" style="top:348px"></div>
<div class="ln" style="top:367px">11</div>
<div class="code" style="top:367px">  return 0;</div>
<div class="dot" style="top:368px"></div>
<div class="ln" style="top:387px">12</div>
<div class="code" style="top:387px">}</div>
<div class="dot" style="top:388px"></div>
<div class="a" style="left:434px;top:808px;width:1484px;height:22px;background:#f0f0f0"></div>
<div class="a mono pre" style="left:437px;top:812px;font-size:14.5px;line-height:16px">000011C5</div>
<div class="a mono pre" style="left:514px;top:812px;font-size:14.5px;line-height:16px">main:9 (11C5)</div>
<div class="a" style="left:509px;top:810px;width:1px;height:18px;background:#d8d8d8"></div>
<div class="a" style="left:632px;top:810px;width:1px;height:18px;background:#d8d8d8"></div>
<div class="a" style="left:647px;top:810px;width:1px;height:18px;background:#d8d8d8"></div>
<div class="a" style="left:0;top:835px;width:1920px;height:26px;border:1px solid #a8a8a8;background:#f0f0f0"></div>
<svg class="a" style="left:4px;top:840px" width="15" height="16" viewBox="0 0 15 16"><rect x="0.5" y="0.5" width="13" height="15" fill="#f4f8ff" stroke="#4a6aa0"/><rect x="0.5" y="0.5" width="13" height="2" fill="#30a0f0"/><path d="M3 5.5H11M3 7.5H11M3 9.5H11M3 11.5H11M3 13.5H11" stroke="#3a5070"/></svg>
<div class="a mono pre" style="left:25px;top:842px;font-size:14.5px;letter-spacing:-0.7px;line-height:16px">Output window</div>
<svg class="a" style="left:1842px;top:840px" width="75" height="18" viewBox="0 0 75 18">
<rect x="6.5" y="5.5" width="8" height="8" fill="none" stroke="#000" stroke-width="1.3"/><rect x="6" y="5" width="9" height="2" fill="#000"/>
<rect x="37.5" y="5.5" width="5" height="5" fill="none" stroke="#000" stroke-width="1.2"/><rect x="34.5" y="8.5" width="5" height="5" fill="#f0f0f0" stroke="#000" stroke-width="1.2"/>
<path d="M61.5 6 L68.5 13 M68.5 6 L61.5 13" stroke="#000" stroke-width="1.6"/>
</svg>
<div class="a" style="left:0;top:863px;width:1920px;height:117px;border:1px solid #828790;background:#fff;overflow:hidden"></div>
<div class="out" style="top:862px">118D: variable 'v0' is possibly undefined</div>
<div class="out" style="top:882px">1090: using guessed type __int64 __isoc99_scanf(const char *, ...);</div>
<div class="out" style="top:902px">1188: using guessed type __int64 __fastcall sub_1188();</div>
<div class="out" style="top:922px">1188: could not find valid save-restore pair for rbp</div>
<div class="out" style="top:942px">118D: variable 'v3' is possibly undefined</div>
<div class="out" style="top:962px">1090: using guessed type __int64 __isoc99_scanf(const char *, ...);</div>
<div class="a" style="left:1899px;top:864px;width:19px;height:115px;background:#f0f0f0"></div>
<div class="a" style="left:1899px;top:936px;width:19px;height:22px;background:#cdcdcd"></div>
<svg class="a" style="left:1902px;top:868px" width="14" height="12"><path d="M2.8 8.6 L7 4.4 L11.2 8.6" fill="none" stroke="#505050" stroke-width="2.1"/></svg>
<svg class="a" style="left:1902px;top:963px" width="14" height="12"><path d="M2.8 3.4 L7 7.6 L11.2 3.4" fill="none" stroke="#505050" stroke-width="2.1"/></svg>
<div class="a" style="left:18px;top:982px;width:46px;height:24px;background:#e1e1e1;border:1px solid #adadad"></div>
<div class="a mono pre" style="left:21px;top:988px;font-size:14.5px;letter-spacing:-0.7px;line-height:16px">IDC</div>
<div class="a" style="left:68px;top:981px;width:1851px;height:26px;background:#fff;border:1px solid #7a7a7a"></div>
<div class="a" style="left:102px;top:1010px;width:1px;height:18px;background:#d0d0d0"></div>
<div class="a" style="left:178px;top:1010px;width:1px;height:18px;background:#d0d0d0"></div>
<div class="a" style="left:274px;top:1010px;width:1px;height:18px;background:#d0d0d0"></div>
<div class="a" style="left:0;top:977px;width:18px;height:53px;background:#3c3c3c;border-top-right-radius:4px"></div>
<div class="a" style="left:2px;top:982px;width:15px;height:23px;background:#333;border:1px solid #444"></div>
<div class="a" style="left:6px;top:984px;width:6px;height:1px;background:#6a6a6a"></div>
<div class="a" style="left:6px;top:986px;width:6px;height:1px;background:#6a6a6a"></div>
<div class="a" style="left:6px;top:988px;width:6px;height:1px;background:#6a6a6a"></div>
<div class="a" style="left:6px;top:990px;width:6px;height:1px;background:#6a6a6a"></div>
<div class="a" style="left:6px;top:992px;width:6px;height:1px;background:#6a6a6a"></div>
<div class="a" style="left:6px;top:994px;width:6px;height:1px;background:#6a6a6a"></div>
<div class="a" style="left:6px;top:996px;width:6px;height:1px;background:#6a6a6a"></div>
<div class="a" style="left:6px;top:998px;width:6px;height:1px;background:#6a6a6a"></div>
<div class="a" style="left:6px;top:1000px;width:6px;height:1px;background:#6a6a6a"></div>
<div class="a" style="left:6px;top:1000px;width:6px;height:2px;background:#f0a020"></div>
<div class="a" style="left:6px;top:1007px;width:6px;height:1px;background:#6a6a6a"></div>
<div class="a" style="left:6px;top:1009px;width:6px;height:1px;background:#6a6a6a"></div>
<div class="a" style="left:6px;top:1011px;width:6px;height:1px;background:#6a6a6a"></div>
<div class="a" style="left:6px;top:1013px;width:6px;height:1px;background:#6a6a6a"></div>
<div class="a" style="left:6px;top:1015px;width:6px;height:1px;background:#6a6a6a"></div>
<div class="a" style="left:6px;top:1017px;width:6px;height:1px;background:#6a6a6a"></div>
<div class="a" style="left:6px;top:1019px;width:6px;height:1px;background:#6a6a6a"></div>
<div class="a" style="left:6px;top:1021px;width:6px;height:1px;background:#6a6a6a"></div>
<div class="a" style="left:6px;top:1023px;width:6px;height:1px;background:#6a6a6a"></div>
<div class="a" style="left:6px;top:1023px;width:6px;height:2px;background:#40d040"></div>
<div class="a mono pre" style="left:2px;top:1012px;font-size:14.6px;line-height:16px">AU:</div>
<div class="a mono pre" style="left:47px;top:1012px;font-size:14.6px;line-height:16px">idle</div>
<div class="a mono pre" style="left:107px;top:1012px;font-size:14.6px;line-height:16px">Down</div>
<div class="a mono pre" style="left:183px;top:1012px;font-size:14.6px;line-height:16px">Disk: 33GB</div>
</body></html>
